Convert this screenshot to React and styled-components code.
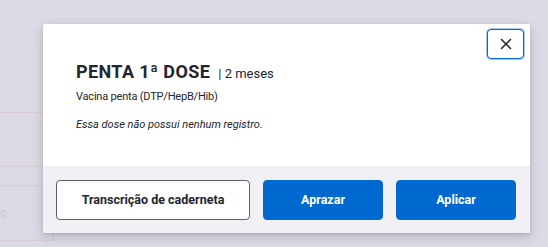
import React from "react";
import styled, { createGlobalStyle } from "styled-components";

const Global = createGlobalStyle`
  html, body { margin: 0; padding: 0; }
  body {
    width: 548px;
    height: 247px;
    overflow: hidden;
    background: #f4f4f8;
    font-family: "Roboto", "Noto Sans", sans-serif;
    color: #24252e;
  }
`;

const Page = styled.div`
  position: relative;
  width: 548px;
  height: 247px;
  display: flex;
  flex-direction: column;
  padding-top: 30px;
  box-sizing: border-box;
`;

const TopRule = styled.div`
  height: 1px;
  background: #e6e6ee;
  margin-bottom: 81px;
`;

const PinkRow = styled.div`
  width: 54px;
  height: ${(p) => p.h}px;
  border: 1px solid #f0a0aa;
  border-left: none;
  background: #f8eef1;
  box-sizing: border-box;
  margin-bottom: ${(p) => p.mb}px;
  display: flex;
  align-items: center;
  font-size: 12px;
  color: #e07f8c;
`;

const Overlay = styled.div`
  position: absolute;
  inset: 0;
  background: rgba(212, 213, 224, 0.82);
`;

const Modal = styled.div`
  position: absolute;
  left: 43px;
  top: 24px;
  width: 487px;
  height: 209px;
  background: #ffffff;
  border-radius: 2px;
  box-shadow: 0 4px 12px rgba(0, 0, 0, 0.18), 0 1px 3px rgba(0, 0, 0, 0.1);
  display: flex;
  flex-direction: column;
  overflow: hidden;
`;

const Body = styled.div`
  flex: 1;
  padding: 37px 33px 0;
  position: relative;
`;

const CloseButton = styled.button`
  position: absolute;
  top: 5px;
  right: 6px;
  width: 37px;
  height: 30px;
  box-sizing: border-box;
  border: 1px solid #0069d0;
  border-radius: 4px;
  background: #fff;
  display: flex;
  align-items: center;
  justify-content: center;
  padding: 0;
  box-shadow: 0 0 0 1px rgba(0, 105, 208, 0.35);
`;

const TitleLine = styled.div`
  display: flex;
  align-items: baseline;
  gap: 8px;
`;

const Title = styled.h1`
  margin: 0;
  font-size: 18px;
  font-weight: 700;
  letter-spacing: 0.4px;
  line-height: 22px;
  color: #24252e;
`;

const Age = styled.span`
  font-size: 13px;
  color: #24252e;
`;

const Subtitle = styled.div`
  margin-top: 6px;
  font-size: 11px;
  letter-spacing: -0.2px;
  line-height: 16px;
`;

const Note = styled.p`
  margin: 12px 0 0;
  font-size: 11px;
  font-style: italic;
  line-height: 16px;
`;

const Footer = styled.div`
  height: 67px;
  box-sizing: border-box;
  background: #f0f0f5;
  display: flex;
  align-items: center;
  gap: 13px;
  padding: 0 14px 0 13px;
`;

const Button = styled.button`
  height: 40px;
  width: ${(p) => p.w}px;
  box-sizing: border-box;
  border-radius: 4px;
  font-family: inherit;
  font-size: 12.5px;
  font-weight: 700;
  border: 1px solid ${(p) => (p.primary ? "#0069d0" : "#5e5f6e")};
  background: ${(p) => (p.primary ? "#0069d0" : "#ffffff")};
  color: ${(p) => (p.primary ? "#ffffff" : "#24252e")};
`;

export default function App() {
  return (
    <>
      <Global />
      <Page>
        <TopRule />
        <PinkRow h={55} mb={18} />
        <PinkRow h={56} mb={0}>o</PinkRow>
        <Overlay />
        <Modal>
          <Body>
            <CloseButton aria-label="Fechar">
              <svg width="12" height="12" viewBox="0 0 12 12">
                <path d="M1.5 1.5 L10.5 10.5 M10.5 1.5 L1.5 10.5" stroke="#24252e" strokeWidth="1.6" strokeLinecap="round" />
              </svg>
            </CloseButton>
            <TitleLine>
              <Title>PENTA 1ª DOSE</Title>
              <Age>| 2 meses</Age>
            </TitleLine>
            <Subtitle>Vacina penta (DTP/HepB/Hib)</Subtitle>
            <Note>Essa dose não possui nenhum registro.</Note>
          </Body>
          <Footer>
            <Button w={194}>Transcrição de caderneta</Button>
            <Button primary w={120}>Aprazar</Button>
            <Button primary w={120}>Aplicar</Button>
          </Footer>
        </Modal>
      </Page>
    </>
  );
}
